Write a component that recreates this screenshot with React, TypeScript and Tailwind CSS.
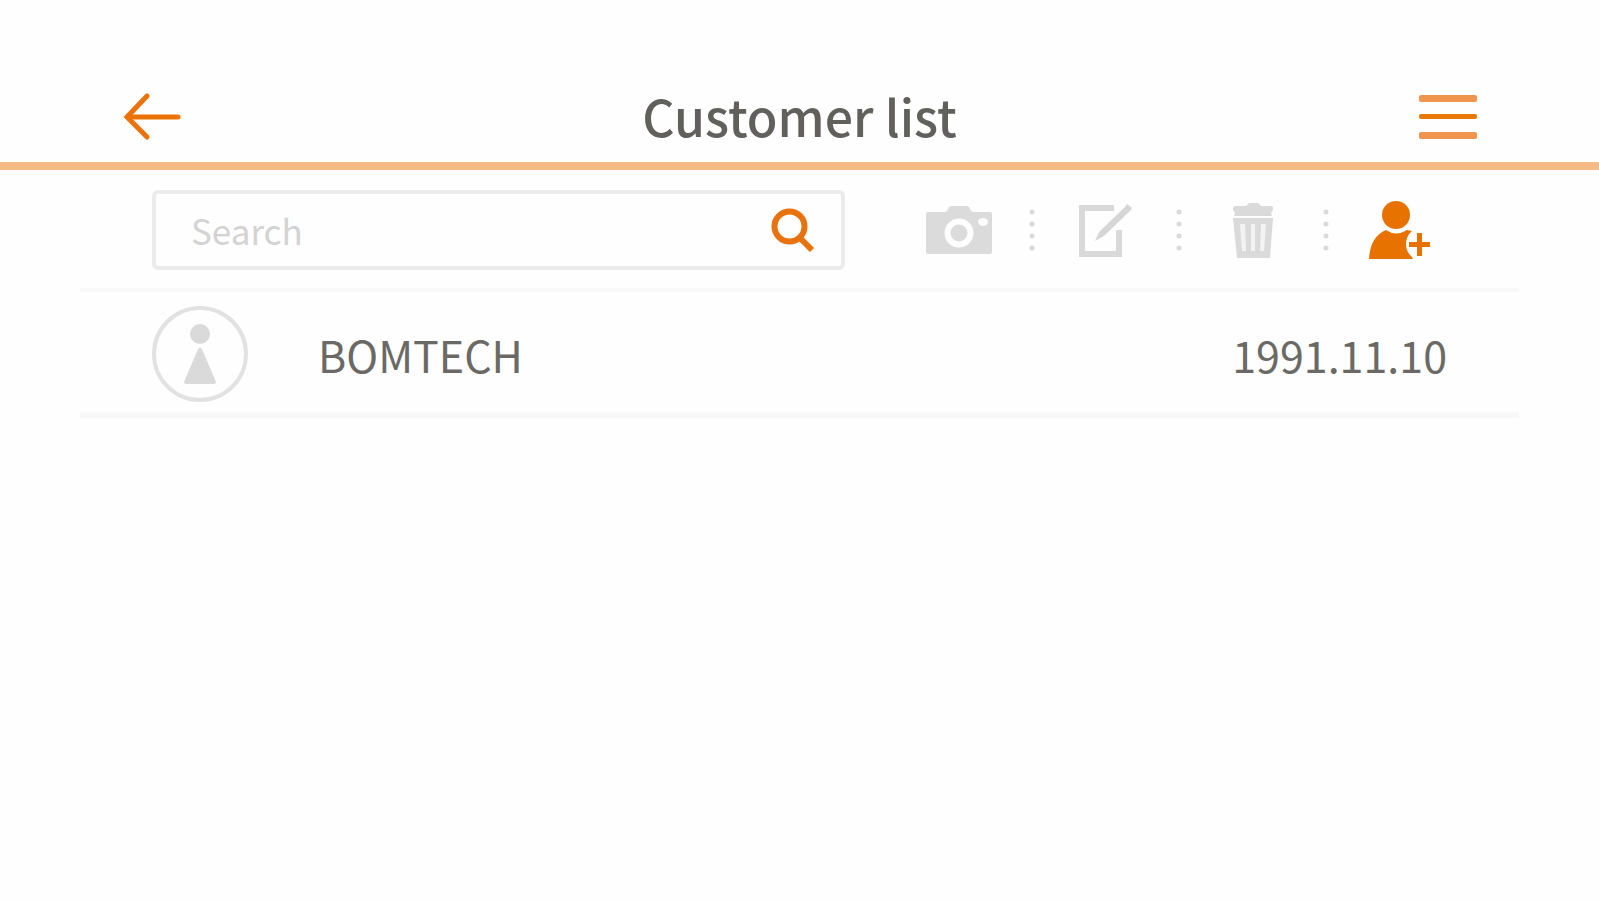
import type { ReactNode } from "react";

const customers = [{ id: 1, name: "BOMTECH", birth: "1991.11.10" }];

function BackIcon() {
  return (
    <svg width="60" height="50" viewBox="0 0 60 50" fill="none" stroke="#ea7208" strokeWidth="5" strokeLinecap="round">
      <path d="M56 25H6" />
      <path d="M25 4L5 25l20 20" />
    </svg>
  );
}

function MenuIcon() {
  return (
    <svg width="60" height="50" viewBox="0 0 60 50">
      <rect x="2" y="3" width="58" height="7" rx="2" fill="#ef954f" />
      <rect x="2" y="22" width="58" height="5" rx="2" fill="#e87806" />
      <rect x="2" y="40" width="58" height="7" rx="2" fill="#ef954f" />
    </svg>
  );
}

function SearchIcon() {
  return (
    <svg width="44" height="44" viewBox="0 0 44 44" fill="none" stroke="#e8720c">
      <circle cx="18.5" cy="18.5" r="15" strokeWidth="6" />
      <path d="M29 30L41 42" strokeWidth="6" />
    </svg>
  );
}

function CameraIcon() {
  return (
    <svg width="66" height="48" viewBox="0 0 66 48" fill="#dbdbdb">
      <path d="M2 6h17q2 0 3-3t4-3h14q3 0 4 3t3 3h17a2 2 0 0 1 2 2v38a2 2 0 0 1-2 2H2a2 2 0 0 1-2-2V8a2 2 0 0 1 2-2z" />
      <circle cx="33" cy="27" r="11.5" fill="none" stroke="#fefefe" strokeWidth="6" />
      <ellipse cx="57" cy="16" rx="5" ry="4" fill="#fefefe" />
    </svg>
  );
}

function EditIcon() {
  return (
    <svg width="56" height="56" viewBox="0 0 56 56" fill="none" stroke="#d9d9d9">
      <path d="M36 6H4v46h37V28" strokeWidth="6" />
      <path d="M21 30L47 5l2-3 5 4-2 3-26 25-9 5z" fill="#d6d6d6" stroke="none" />
    </svg>
  );
}

function TrashIcon() {
  return (
    <svg width="42" height="56" viewBox="0 0 42 56" fill="#dadada">
      <path d="M14 4l3-3h9l3 3h10q2 0 2 2v2l-2 3 1 3H2l1-3-2-3V6q0-2 2-2z" />
      <path d="M1 16h40l-3 40H5z" />
      <path d="M8 22h5l1 27h-4zM19 22h4v27h-4zM29 22h5l-2 27h-4z" fill="#f3f3f3" />
    </svg>
  );
}

function AddUserIcon() {
  return (
    <svg width="62" height="58" viewBox="0 0 62 58" fill="#e87200">
      <circle cx="27" cy="14" r="14" />
      <path d="M17 29q10 7 21 0l5 1a17 17 0 0 0 0 26l1 2H0q1-22 17-29z" />
      <path d="M48 32h5v9h8v5h-8v9h-5v-9h-8v-5h8z" />
    </svg>
  );
}

function AvatarIcon() {
  return (
    <svg width="96" height="96" viewBox="0 0 96 96" fill="#dadada" className="shrink-0">
      <circle cx="48" cy="48" r="46" fill="none" stroke="#e2e2e2" strokeWidth="4" />
      <circle cx="48" cy="28" r="10" />
      <path d="M46 43q2-3 4 0l14 33q0 2-2 2H34q-2 0-2-2z" />
    </svg>
  );
}

function Divider() {
  return (
    <svg width="6" height="42" viewBox="0 0 6 42" fill="#dadada" className="-mx-px shrink-0" aria-hidden="true">
      <circle cx="3" cy="3" r="2.5" />
      <circle cx="3" cy="15" r="2.5" />
      <circle cx="3" cy="27" r="2.5" />
      <circle cx="3" cy="39" r="2.5" />
    </svg>
  );
}

function ToolButton({ label, children }: { label: string; children: ReactNode }) {
  return (
    <button type="button" aria-label={label} className="flex h-20 w-[143px] items-center justify-center">
      {children}
    </button>
  );
}

export default function App() {
  return (
    <main className="min-h-screen bg-[#fefefe] font-['Noto_Sans_CJK_KR',sans-serif] text-[#6b6966]">
      <header className="flex items-center justify-between border-b-8 border-[#f8ba84] px-[122px] pt-[72px]">
        <button type="button" aria-label="Back">
          <BackIcon />
        </button>
        <h1 className="pb-1 text-[50px] leading-[86px] font-medium text-[#62605d]">Customer list</h1>
        <button type="button" aria-label="Menu">
          <MenuIcon />
        </button>
      </header>

      <section className="mx-20">
        <div className="flex items-center border-b-4 border-[#f9f9f9] pt-5 pr-12 pb-[18px] pl-[72px]">
          <form className="mr-[42px] flex h-20 min-w-0 flex-1 items-center rounded-md border-4 border-[#ebebeb] pr-[26px] pl-[35px]">
            <input
              type="text"
              aria-label="Search"
              placeholder="Search"
              className="min-w-0 flex-1 bg-transparent text-[35px] leading-[52px] outline-none placeholder:text-[#d3d3d3]"
            />
            <button type="button" aria-label="Find customer">
              <SearchIcon />
            </button>
          </form>
          <div className="flex shrink-0 items-center">
            <ToolButton label="Take photo">
              <CameraIcon />
            </ToolButton>
            <Divider />
            <ToolButton label="Edit customer">
              <EditIcon />
            </ToolButton>
            <Divider />
            <ToolButton label="Delete customer">
              <TrashIcon />
            </ToolButton>
            <Divider />
            <ToolButton label="Add customer">
              <AddUserIcon />
            </ToolButton>
          </div>
        </div>

        <ul>
          {customers.map((customer) => (
            <li
              key={customer.id}
              className="flex items-center border-b-6 border-[#f8f8f8] px-[72px] pt-[14px] pb-[10px] text-[43px] leading-[64px]"
            >
              <AvatarIcon />
              <span className="ml-[70px] flex-1">{customer.name}</span>
              <span>{customer.birth}</span>
            </li>
          ))}
        </ul>
      </section>
    </main>
  );
}
